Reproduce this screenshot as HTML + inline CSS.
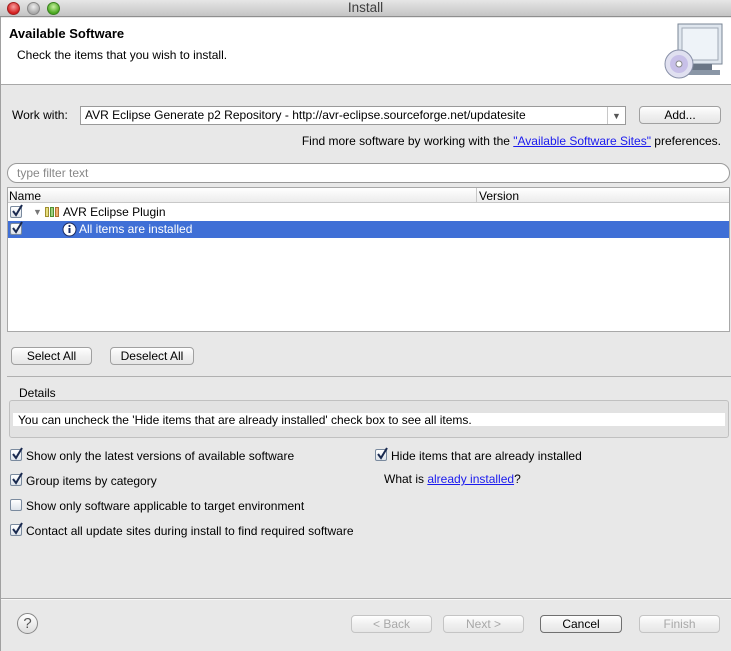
<!DOCTYPE html>
<html><head><style>
*{margin:0;padding:0;box-sizing:border-box}
body{width:731px;height:651px;background:#e8e8e8;font-family:"Liberation Sans",sans-serif;font-size:12px;color:#000;position:relative;overflow:hidden}
.a{position:absolute;white-space:nowrap;line-height:16px}
.btn{position:absolute;height:18px;background:linear-gradient(#fff,#f0f0f0 50%,#e6e6e6);border:1px solid #a0a0a0;border-radius:4px;text-align:center;line-height:16px;font-size:12px}
.dis{color:#a8a8a8;border-color:#c4c4c4}
.cb{position:absolute;width:12px;height:12px;border:1px solid #7a8a9e;border-radius:2px;background:linear-gradient(#fff,#dde3ea)}
.cb svg{position:absolute;left:0;top:-3px}
a{color:#1a1aee;text-decoration:underline}
</style></head><body>
<div class="a" style="left:0;top:0;width:731px;height:17px;background:linear-gradient(#e6e6e6,#c4c4c4);border-bottom:1px solid #8e8e8e"></div>
<div class="a" style="left:7px;top:2px;width:13px;height:13px;border-radius:50%;background:radial-gradient(circle at 50% 35%,#f8a0a0,#d42020 70%);border:1px solid #a02020"></div>
<div class="a" style="left:27px;top:2px;width:13px;height:13px;border-radius:50%;background:radial-gradient(circle at 50% 35%,#eee,#a8a8a8 70%);border:1px solid #888"></div>
<div class="a" style="left:47px;top:2px;width:13px;height:13px;border-radius:50%;background:radial-gradient(circle at 50% 35%,#c8f0a0,#4aa820 70%);border:1px solid #3a8020"></div>
<div class="a" style="left:0;top:0;width:731px;text-align:center;font-size:13.5px;color:#404040">Install</div>
<div class="a" style="left:0;top:18px;width:731px;height:67px;background:#fff;border-bottom:1px solid #a8a8a8"></div>
<div class="a" style="left:9px;top:26px;font-weight:bold;font-size:13px">Available Software</div>
<div class="a" style="left:17px;top:47px">Check the items that you wish to install.</div>
<svg class="a" style="left:662px;top:20px" width="64" height="62"><rect x="16" y="4" width="44" height="40" fill="#dfe6ee" stroke="#7a8696"/><rect x="20" y="8" width="36" height="32" fill="#eef3f8" stroke="#a0aab6"/><rect x="30" y="44" width="20" height="6" fill="#6a7686"/><rect x="24" y="50" width="34" height="5" fill="#8a96a6"/><circle cx="17" cy="44" r="14" fill="#e0e0f0" stroke="#8890a8"/><circle cx="17" cy="44" r="9" fill="#c8c0e8"/><circle cx="17" cy="44" r="3" fill="#fff" stroke="#888"/></svg>
<div class="a" style="left:12px;top:107px">Work with:</div>
<div class="a" style="left:80px;top:106px;width:546px;height:19px;background:#fff;border:1px solid #9a9a9a"></div>
<div class="a" style="left:85px;top:107px">AVR Eclipse Generate p2 Repository - http://avr-eclipse.sourceforge.net/updatesite</div>
<div class="a" style="left:607px;top:107px;width:1px;height:17px;background:#c8c8c8"></div>
<div class="a" style="left:612px;top:108px;font-size:9px;color:#555">▼</div>
<div class="btn" style="left:639px;top:106px;width:82px">Add...</div>
<div class="a" style="right:10px;top:133px">Find more software by working with the <a>"Available Software Sites"</a> preferences.</div>
<div class="a" style="left:7px;top:163px;width:723px;height:20px;background:#fff;border:1px solid #9a9a9a;border-radius:10px"></div>
<div class="a" style="left:17px;top:165px;color:#888">type filter text</div>
<div class="a" style="left:7px;top:187px;width:723px;height:145px;background:#fff;border:1px solid #a8a8a8"></div>
<div class="a" style="left:8px;top:188px;width:721px;height:15px;background:linear-gradient(#fff,#ececec);border-bottom:1px solid #c8c8c8"></div>
<div class="a" style="left:476px;top:188px;width:1px;height:15px;background:#c8c8c8"></div>
<div class="a" style="left:9px;top:188px">Name</div>
<div class="a" style="left:479px;top:188px">Version</div>
<div class="a" style="left:8px;top:221px;width:721px;height:17px;background:#3f6fd6"></div>
<div class="cb" style="left:10px;top:206px"><svg width="14" height="14"><path d="M2 7 L5 11 L11 1" fill="none" stroke="#1a2a50" stroke-width="2"/></svg></div>
<div class="cb" style="left:10px;top:223px"><svg width="14" height="14"><path d="M2 7 L5 11 L11 1" fill="none" stroke="#1a2a50" stroke-width="2"/></svg></div>
<div class="a" style="left:33px;top:204px;font-size:9px;color:#777">▼</div>
<svg class="a" style="left:45px;top:207px" width="16" height="10"><rect x="0.5" y="0.5" width="3" height="9" fill="#e8e080" stroke="#a09030"/><rect x="5.5" y="0.5" width="3" height="9" fill="#a0d080" stroke="#509030"/><rect x="10.5" y="0.5" width="3" height="9" fill="#f0b070" stroke="#b07030"/></svg>
<div class="a" style="left:63px;top:204px">AVR Eclipse Plugin</div>
<svg class="a" style="left:62px;top:222px" width="15" height="15"><circle cx="7.5" cy="7.5" r="6.5" fill="#fff" stroke="#1a2a60"/><rect x="6.5" y="6" width="2" height="5" fill="#1a2a60"/><circle cx="7.5" cy="4" r="1.1" fill="#1a2a60"/></svg>
<div class="a" style="left:79px;top:221px;color:#fff">All items are installed</div>
<div class="btn" style="left:11px;top:347px;width:81px">Select All</div>
<div class="btn" style="left:110px;top:347px;width:84px">Deselect All</div>
<div class="a" style="left:7px;top:376px;width:724px;height:1px;background:#b0b0b0"></div>
<div class="a" style="left:19px;top:385px">Details</div>
<div class="a" style="left:9px;top:400px;width:720px;height:38px;border:1px solid #c0c0c0;border-radius:3px;background:#e2e2e2"></div>
<div class="a" style="left:13px;top:413px;width:712px;height:13px;background:#fff"></div>
<div class="a" style="left:18px;top:412px">You can uncheck the 'Hide items that are already installed' check box to see all items.</div>
<div class="cb" style="left:10px;top:449px"><svg width="14" height="14"><path d="M2 7 L5 11 L11 1" fill="none" stroke="#1a2a50" stroke-width="2"/></svg></div>
<div class="a" style="left:26px;top:448px">Show only the latest versions of available software</div>
<div class="cb" style="left:10px;top:474px"><svg width="14" height="14"><path d="M2 7 L5 11 L11 1" fill="none" stroke="#1a2a50" stroke-width="2"/></svg></div>
<div class="a" style="left:26px;top:473px">Group items by category</div>
<div class="cb" style="left:10px;top:499px"></div>
<div class="a" style="left:26px;top:498px">Show only software applicable to target environment</div>
<div class="cb" style="left:10px;top:524px"><svg width="14" height="14"><path d="M2 7 L5 11 L11 1" fill="none" stroke="#1a2a50" stroke-width="2"/></svg></div>
<div class="a" style="left:26px;top:523px">Contact all update sites during install to find required software</div>
<div class="cb" style="left:375px;top:449px"><svg width="14" height="14"><path d="M2 7 L5 11 L11 1" fill="none" stroke="#1a2a50" stroke-width="2"/></svg></div>
<div class="a" style="left:391px;top:448px">Hide items that are already installed</div>
<div class="a" style="left:384px;top:471px">What is <a>already installed</a>?</div>
<div class="a" style="left:0;top:598px;width:731px;height:1px;background:#a8a8a8"></div>
<div class="a" style="left:0;top:599px;width:731px;height:1px;background:#f8f8f8"></div>
<div class="a" style="left:17px;top:613px;width:21px;height:21px;border-radius:50%;border:1px solid #888;background:linear-gradient(#fff,#ddd);text-align:center;line-height:19px;font-size:15px;color:#555">?</div>
<div class="btn dis" style="left:351px;top:615px;width:81px">&lt; Back</div>
<div class="btn dis" style="left:443px;top:615px;width:81px">Next &gt;</div>
<div class="btn" style="left:540px;top:615px;width:82px;border-color:#707070">Cancel</div>
<div class="btn dis" style="left:639px;top:615px;width:81px">Finish</div>
<div class="a" style="left:0;top:17px;width:1px;height:634px;background:#a0a0a0"></div>
</body></html>
